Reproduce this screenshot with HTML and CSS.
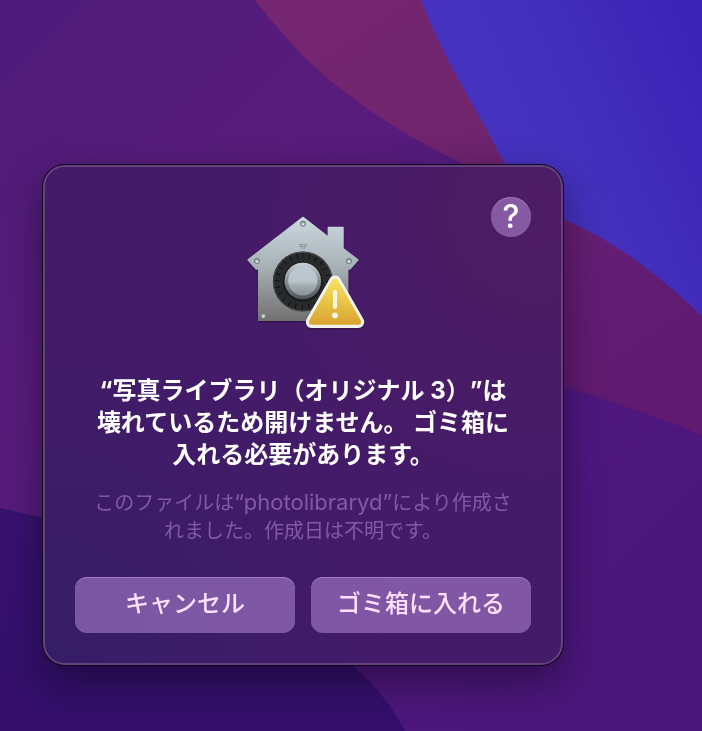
FILE: index.html
```html
<!DOCTYPE html>
<html lang="ja">
<head>
  <meta charset="UTF-8" />
  <title>Gatekeeper</title>
  <meta name="viewport" content="width=device-width, initial-scale=1.0" />
  <link rel="stylesheet" href="styles.css">
</head>
<body>

  <!-- Desktop wallpaper -->
  <svg class="wallpaper" viewBox="0 0 702 731" preserveAspectRatio="none" aria-hidden="true">
    <defs>
      <linearGradient id="purple" x1="0" y1="0" x2="1" y2="1">
        <stop offset="0" stop-color="#4e1b7a" />
        <stop offset="0.3" stop-color="#581c7b" />
        <stop offset="0.6" stop-color="#4f187e" />
        <stop offset="1" stop-color="#4a167b" />
      </linearGradient>
      <linearGradient id="magenta" x1="0" y1="0" x2="0.7" y2="1">
        <stop offset="0" stop-color="#752670" />
        <stop offset="0.4" stop-color="#70256d" />
        <stop offset="0.8" stop-color="#621c74" />
        <stop offset="1" stop-color="#601b70" />
      </linearGradient>
      <linearGradient id="blue" x1="0" y1="0.6" x2="1" y2="0.1">
        <stop offset="0" stop-color="#4634c2" />
        <stop offset="0.5" stop-color="#4430bd" />
        <stop offset="1" stop-color="#3b22b6" />
      </linearGradient>
      <linearGradient id="indigo" x1="0" y1="0" x2="0" y2="1">
        <stop offset="0" stop-color="#38126f" />
        <stop offset="1" stop-color="#330f6b" />
      </linearGradient>
    </defs>
    <rect width="702" height="731" fill="url(#purple)" />
    <path d="M255 0C290 45 318 72 340 88C380 120 420 143 460 162L480 362C560 383 640 410 702 435V0Z" fill="url(#magenta)" />
    <path d="M421 0C440 50 468 96 487 130C504 162 520 199 563 219C620 243 665 281 702 316V0Z" fill="url(#blue)" />
    <path d="M0 508C150 540 270 595 352 665C378 688 394 709 405 731H0Z" fill="url(#indigo)" />
  </svg>

  <main class="desktop">
    <div class="dialog" role="alertdialog" aria-labelledby="title" aria-describedby="detail">

      <div class="dialog-top">
        <!-- House with lock dial and warning badge -->
        <svg class="app-icon" viewBox="239 205 128 128" aria-hidden="true">
          <defs>
            <linearGradient id="house" x1="0" y1="0" x2="0" y2="1">
              <stop offset="0" stop-color="#cbd8de" />
              <stop offset="0.45" stop-color="#a9b4b9" />
              <stop offset="1" stop-color="#727070" />
            </linearGradient>
            <linearGradient id="rim" x1="0" y1="0" x2="0" y2="1">
              <stop offset="0" stop-color="#d5dde1" />
              <stop offset="0.5" stop-color="#8b9499" />
              <stop offset="1" stop-color="#50575b" />
            </linearGradient>
            <linearGradient id="knob" x1="0" y1="0" x2="0" y2="1">
              <stop offset="0" stop-color="#bdc9d1" />
              <stop offset="0.5" stop-color="#b9c5cb" />
              <stop offset="0.65" stop-color="#a3aeb4" />
              <stop offset="1" stop-color="#879298" />
            </linearGradient>
            <linearGradient id="warning" x1="0" y1="0" x2="0" y2="1">
              <stop offset="0" stop-color="#fae45f" />
              <stop offset="1" stop-color="#d8a330" />
            </linearGradient>
            <radialGradient id="screw" cx="0.5" cy="0.7" r="0.6">
              <stop offset="0" stop-color="#f1f4f5" />
              <stop offset="1" stop-color="#838b8f" />
            </radialGradient>
            <filter id="iconShadow" x="-30%" y="-30%" width="160%" height="160%">
              <feDropShadow dx="0" dy="1" stdDeviation="1" flood-color="#000" flood-opacity="0.4" />
            </filter>
          </defs>
          <path filter="url(#iconShadow)" fill="url(#house)" d="M302 217.3Q303 216.4 304 217.3L327.7 235.7V227.3Q327.7 226.7 328.3 226.7H343.1Q343.7 226.7 343.7 227.3V248.3L358.3 259.3Q358.8 260 358.3 260.6L350.5 269.2Q349.5 270 348.3 269.5V321H258V269.5Q256.5 270 255.5 269.2L247.7 260.6Q247.2 260 247.7 259.3Z" />
          <g fill="url(#screw)" stroke="#707a7e" stroke-width="1">
            <circle cx="303" cy="223.7" r="2.6" />
            <circle cx="257" cy="261" r="2.6" />
            <circle cx="349" cy="261" r="2.6" />
            <circle cx="263.3" cy="315.7" r="2.6" />
          </g>
          <path d="M299 244.7H307M301 246.5H305M299.5 244.7L302.2 249M306.5 244.7L303.8 249" fill="none" stroke="#7e888d" stroke-width="0.8" />
          <circle cx="302.8" cy="281.5" r="30" fill="#292a2b" />
          <circle cx="302.8" cy="281.5" r="29.3" fill="none" stroke="#48494a" stroke-width="1" />
          <circle cx="302.8" cy="281.5" r="25.7" fill="none" stroke="#0d0e0f" stroke-width="5" stroke-dasharray="0.9 5.83" stroke-dashoffset="0.45" transform="rotate(-90 302.8 281.5)" />
          <circle cx="302.8" cy="281.8" r="20" fill="#1b1c1d" />
          <circle cx="302.8" cy="281" r="18.3" fill="url(#rim)" />
          <circle cx="302.8" cy="281" r="16.3" fill="none" stroke="#3f474b" stroke-opacity="0.3" stroke-width="3.5" stroke-dasharray="0.5 1.8" />
          <circle cx="302.8" cy="281" r="14.6" fill="url(#knob)" />
          <g filter="url(#iconShadow)">
            <path d="M335 281.4L311.8 322H358.2Z" fill="#f2f1ec" stroke="#f2f1ec" stroke-width="12" stroke-linejoin="round" />
          </g>
          <path d="M335 278.6C336.6 278.6 337.5 279.3 338.3 280.7L360.3 319.4C361.8 322.3 360.9 324.7 357.7 324.7H312.3C309.1 324.7 308.2 322.3 309.7 319.4L331.7 280.7C332.5 279.3 333.4 278.6 335 278.6Z" fill="url(#warning)" />
          <rect x="333" y="290" width="4" height="19" rx="2" fill="#f9f6e9" />
          <circle cx="335" cy="315.5" r="2.9" fill="#f9f6e9" />
        </svg>
        <button class="help" type="button" aria-label="ヘルプ">?</button>
      </div>

      <h1 class="title" id="title">“写真ライブラリ（オリジナル 3）”は壊れているため開けません。 ゴミ箱に入れる必要があります。</h1>
      <p class="detail" id="detail">このファイルは<span class="creator">“photolibraryd”</span>により作成されました。作成日は不明です。</p>

      <div class="actions">
        <button class="action" type="button">キャンセル</button>
        <button class="action" type="button">ゴミ箱に入れる</button>
      </div>
    </div>
  </main>

</body>
</html>
```
FILE: styles.css
```css
/* Basic reset and styling */
* {
  box-sizing: border-box;
  margin: 0;
  padding: 0;
}
body {
  font-family: Inter, "Noto Sans CJK JP", sans-serif;
  background: #4c177c;
  color: #fff;
  min-height: 100vh;
  text-spacing-trim: space-all;
}

/* Wallpaper fills the window behind the dialog */
.wallpaper {
  position: fixed;
  inset: 0;
  width: 100%;
  height: 100%;
  z-index: -1;
}

.desktop {
  padding: 165px 43px 66px;
}

/* Dialog panel */
.dialog {
  max-width: 520px;
  padding: 30px;
  border: 2px solid #65437f;
  border-radius: 22px;
  background:
    radial-gradient(circle at 95% 10%, #4e1c62 0%, rgba(78,28,98,0) 45%),
    radial-gradient(circle at 0% 100%, #351d66 0%, rgba(53,29,102,0) 50%),
    #441b69;
  box-shadow: 0 0 0 1px #10051c, 0 16px 40px rgba(0,0,0,0.42);
}

/* Icon in the middle, help button at the right */
.dialog-top {
  display: grid;
  grid-template-columns: 1fr 128px 1fr;
  align-items: start;
}
.app-icon {
  grid-column: 2;
  width: 128px;
  height: 128px;
  margin-top: 8px;
}
.help {
  justify-self: end;
  width: 40px;
  height: 40px;
  border: none;
  border-radius: 50%;
  background: #865aa3;
  box-shadow: inset 0 1px 0 #9d75b8;
  color: #fff;
  font-family: inherit;
  font-size: 32px;
  font-weight: 500;
  line-height: 40px;
  cursor: pointer;
}

/* Message */
.title {
  max-width: 420px;
  margin: 42px auto 0;
  font-size: 24px;
  font-weight: 700;
  line-height: 32px;
  text-align: center;
}
.detail {
  max-width: 430px;
  margin: 18px auto 0;
  color: #8459a3;
  font-size: 20px;
  line-height: 28px;
  text-align: center;
}
.creator {
  font-size: 22px;
  line-height: 22px;
}

/* Buttons */
.actions {
  display: grid;
  grid-template-columns: 1fr 1fr;
  gap: 16px;
  margin-top: 32px;
}
.action {
  height: 56px;
  padding-bottom: 8px;
  border: none;
  border-radius: 12px;
  background: rgba(190,145,223,0.5);
  box-shadow: inset 0 1px 0 #a07cc0;
  color: #fbe0ff;
  font-family: inherit;
  font-size: 24px;
  font-weight: 500;
  cursor: pointer;
}
.help:hover,
.action:hover {
  filter: brightness(1.1);
}
```
